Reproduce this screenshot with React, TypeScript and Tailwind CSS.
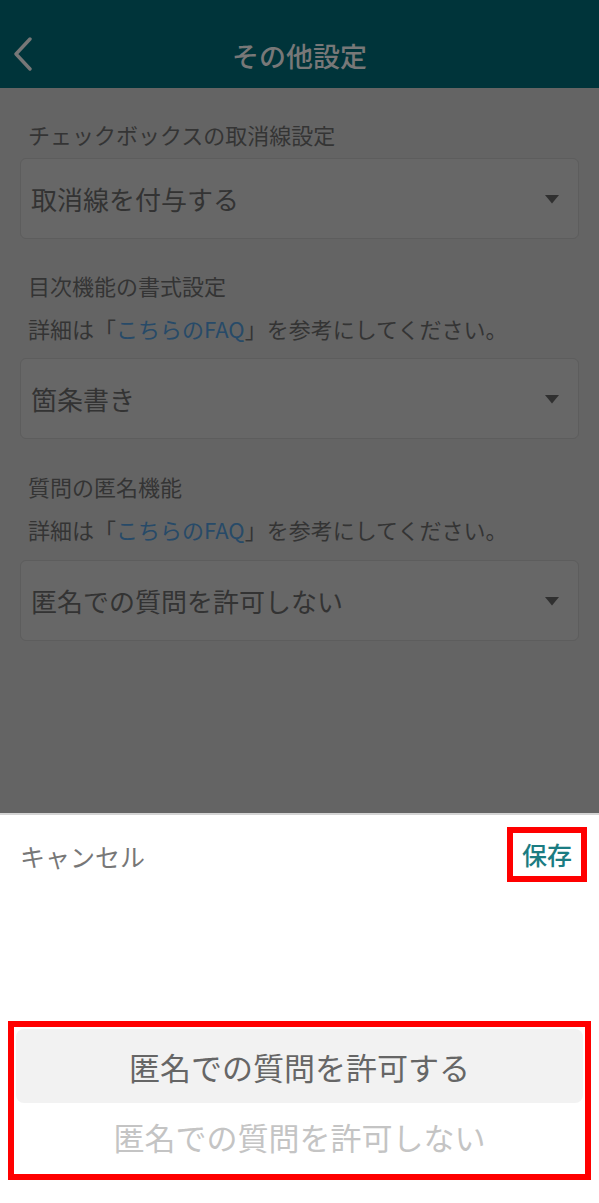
import React from 'react';

const FONT = "font-['Noto_Sans_CJK_JP','Noto_Sans',sans-serif]";

function Caret() {
  return (
    <svg width="16" height="10" viewBox="0 0 16 10" className="shrink-0">
      <path d="M1 1 H15 L8 9.5 Z" fill="#303030" />
    </svg>
  );
}

function SelectBox({ value }: { value: string }) {
  return (
    <div className="h-[81px] rounded-[6px] border border-[#5d5d5d] bg-[#676767] flex items-center justify-between pl-[10px] pr-[18px]">
      <span className="text-[26px] leading-none text-[#333333]">{value}</span>
      <Caret />
    </div>
  );
}

function FaqNote() {
  return (
    <p className="pl-[8px] mt-[13px] text-[22px] leading-[30px] text-[#343434]">
      詳細は「<span className="text-[#274a68]">こちらのFAQ</span>」を参考にしてください。
    </p>
  );
}

export default function App() {
  return (
    <div className={`w-[599px] h-[1203px] flex flex-col bg-[#646464] ${FONT}`}>
      {/* Header */}
      <header className="h-[88px] shrink-0 bg-[#00343a] grid grid-cols-[70px_1fr_70px] items-center">
        <div className="pl-[13px] pt-[20px]">
          <svg width="20" height="34" viewBox="0 0 20 34">
            <path d="M17 2 L3 17 L17 32" fill="none" stroke="#777777" strokeWidth="3.4" strokeLinecap="round" strokeLinejoin="round" />
          </svg>
        </div>
        <h1 className="text-center text-[27px] leading-none font-medium text-[#787878] pt-[22px]">その他設定</h1>
        <div />
      </header>

      {/* Settings (dimmed behind the sheet) */}
      <main className="flex-1 px-[20px] pt-[31px]">
        <section>
          <p className="pl-[8px] text-[22px] leading-[30px] text-[#343434]">チェックボックスの取消線設定</p>
          <div className="mt-[9px]">
            <SelectBox value="取消線を付与する" />
          </div>
        </section>

        <section className="mt-[31px]">
          <p className="pl-[8px] text-[22px] leading-[30px] text-[#343434]">目次機能の書式設定</p>
          <FaqNote />
          <div className="mt-[15px]">
            <SelectBox value="箇条書き" />
          </div>
        </section>

        <section className="mt-[32px]">
          <p className="pl-[8px] text-[22px] leading-[30px] text-[#343434]">質問の匿名機能</p>
          <FaqNote />
          <div className="mt-[16px]">
            <SelectBox value="匿名での質問を許可しない" />
          </div>
        </section>
      </main>

      {/* Bottom picker sheet */}
      <div className="h-[390px] shrink-0 bg-white border-t-2 border-[#d4d4d4] flex flex-col">
        <div className="flex items-start justify-between pt-[12px] pr-[12px]">
          <span className="pl-[20px] pt-[14px] text-[25px] leading-[30px] text-[#777777]">キャンセル</span>
          <div className="border-[6px] border-[#ff0000] w-[80px] h-[55px] flex items-center justify-center">
            <span className="text-[25px] leading-none font-medium text-[#1b7c82]">保存</span>
          </div>
        </div>

        <div className="flex-1" />

        <div className="mx-[8px] mb-[23px] h-[159px] border-[6px] border-[#ff0000] px-[2px] pt-[2px] flex flex-col">
          <div className="h-[74px] rounded-[8px] bg-[#f2f2f2] flex items-center justify-center">
            <span className="text-[31px] leading-none text-[#666666]">匿名での質問を許可する</span>
          </div>
          <div className="flex-1 flex items-center justify-center pb-[4px]">
            <span className="text-[31px] leading-none text-[#c4c4c4]">匿名での質問を許可しない</span>
          </div>
        </div>
      </div>
    </div>
  );
}
